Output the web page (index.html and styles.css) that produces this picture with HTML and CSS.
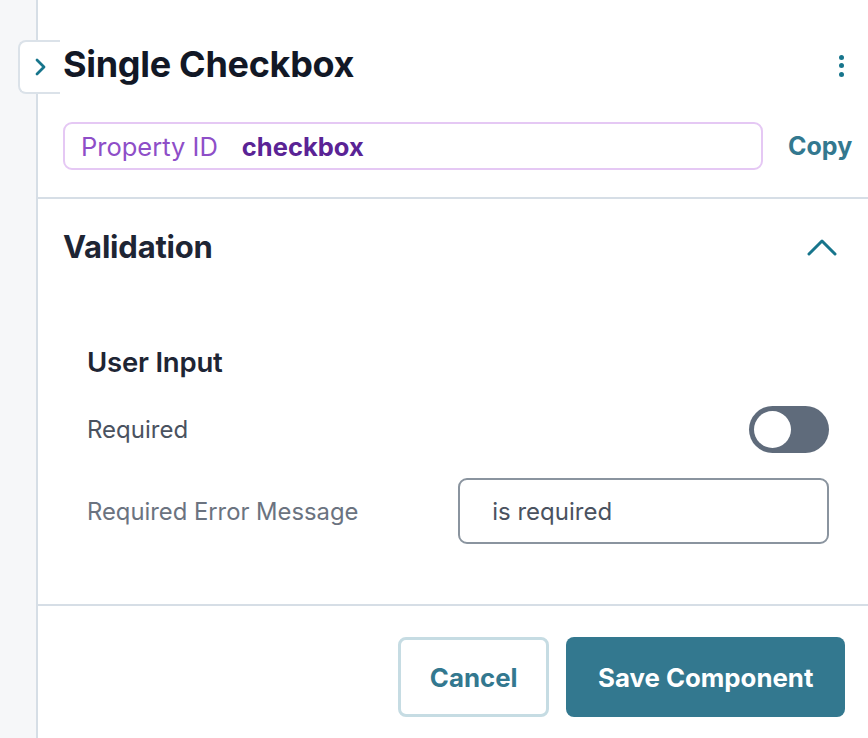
FILE: index.html
```html
<!DOCTYPE html>
<html>
<head>
<meta charset="utf-8">
<link rel="stylesheet" href="styles.css">
</head>
<body>
<div class="app">
  <div class="rail"></div>
  <div class="panel">
    <button class="expand-tab" aria-label="Expand">
      <svg width="14" height="20" viewBox="0 0 14 20"><path d="M3 3 L10 10 L3 17" fill="none" stroke="#17758c" stroke-width="2.8" stroke-linecap="round" stroke-linejoin="round"/></svg>
    </button>
    <header class="header">
      <div class="title-row">
        <h1 class="title">Single Checkbox</h1>
        <span class="kebab" aria-label="More">
          <i></i><i></i><i></i>
        </span>
      </div>
      <div class="prop-row">
        <div class="prop-box">
          <span class="prop-label">Property ID</span>
          <span class="prop-value">checkbox</span>
        </div>
        <span class="copy">Copy</span>
      </div>
    </header>
    <section class="validation">
      <div class="section-head">
        <h2 class="section-title">Validation</h2>
        <svg class="chev-up" width="30" height="18" viewBox="0 0 30 18"><path d="M2 16 L15 3 L28 16" fill="none" stroke="#17758c" stroke-width="3" stroke-linecap="round" stroke-linejoin="round"/></svg>
      </div>
      <div class="group">
        <h3 class="group-title">User Input</h3>
        <div class="field-row">
          <span class="label-dark">Required</span>
          <span class="toggle"><span class="knob"></span></span>
        </div>
        <div class="field-row field-row-input">
          <span class="label-light">Required Error Message</span>
          <div class="text-input">is required</div>
        </div>
      </div>
    </section>
    <footer class="footer">
      <button class="btn btn-cancel">Cancel</button>
      <button class="btn btn-save">Save Component</button>
    </footer>
  </div>
</div>
</body>
</html>
```
FILE: styles.css
```css
* { box-sizing: border-box; }
html, body { margin: 0; padding: 0; background: #ffffff; }
body { font-family: Inter, "Noto Sans", sans-serif; width: 868px; height: 738px; overflow: hidden; }
.app { display: flex; height: 738px; }
.rail { width: 38px; flex: none; background: #f6f7f9; border-right: 2px solid #d6dee6; }
.panel { flex: 1; position: relative; background: #fff; }

.expand-tab {
  position: absolute; left: -20px; top: 40px; width: 42px; height: 54px;
  background: #fff; border: 2px solid #dbe2e9; border-right: none;
  border-radius: 8px 0 0 8px; padding: 0 0 0 14px; margin: 0;
  display: flex; align-items: center; cursor: pointer;
}

.header { padding: 40px 17px 27px 25px; border-bottom: 2px solid #d6dee6; }
.title-row { height: 54px; display: flex; align-items: center; justify-content: space-between; }
.title { margin: 0 0 7px 0; font-size: 36px; font-weight: 700; color: #121826; letter-spacing: -0.3px; line-height: 44px; }
.kebab { display: flex; flex-direction: column; gap: 3.5px; padding-right: 8px; margin-bottom: 3px; }
.kebab i { display: block; width: 5px; height: 5px; border-radius: 50%; background: #17758c; }

.prop-row { margin-top: 28px; display: flex; align-items: center; }
.prop-box {
  width: 700px; height: 48px; border: 2px solid #e5c8f4; border-radius: 9px;
  display: flex; align-items: center; padding-left: 16px; gap: 24px; font-size: 25.5px;
}
.prop-label { color: #8e4ec8; font-weight: 400; }
.prop-value { color: #5a2395; font-weight: 700; }
.copy { margin-left: 25px; font-size: 25px; font-weight: 700; color: #33788f; }

.validation { border-bottom: 2px solid #d6dee6; padding: 0 40px 60px 25px; }
.section-head { height: 94px; display: flex; align-items: center; justify-content: space-between; }
.section-title { margin: 0; font-size: 31px; font-weight: 700; color: #1e2534; letter-spacing: -0.2px; }
.chev-up { margin-right: -8px; margin-top: 2px; }
.group { padding-left: 24px; padding-top: 39px; }
.group-title { margin: 0; font-size: 27.5px; font-weight: 600; color: #1e2534; height: 60px; line-height: 60px; margin-bottom: 14px; letter-spacing: -0.2px; }
.field-row { display: flex; align-items: center; justify-content: space-between; height: 47px; }
.field-row-input { margin-top: 25px; height: 66px; }
.label-dark { font-size: 24px; color: #4a5260; }
.label-light { font-size: 23.8px; color: #6b7380; }
.toggle { width: 80px; height: 47px; border-radius: 24px; background: #5f6b7b; display: flex; align-items: center; padding-left: 5px; }
.knob { width: 37px; height: 37px; border-radius: 50%; background: #fff; display: block; }
.text-input {
  width: 371px; height: 66px; flex: none; border: 2px solid #8a949f; border-radius: 9px;
  display: flex; align-items: center; padding-left: 32px; font-size: 24px; color: #4a5260;
}

.footer { display: flex; justify-content: flex-end; gap: 17px; padding: 31px 24px 0 0; }
.btn { font-family: Inter, "Noto Sans", sans-serif; font-size: 25.8px; font-weight: 700; border-radius: 8px; height: 80px; margin: 0; cursor: pointer; }
.btn-cancel { width: 151px; background: #fff; border: 3px solid #c6dce3; color: #33788f; }
.btn-save { width: 279px; background: #33788f; border: none; color: #fff; }
```
